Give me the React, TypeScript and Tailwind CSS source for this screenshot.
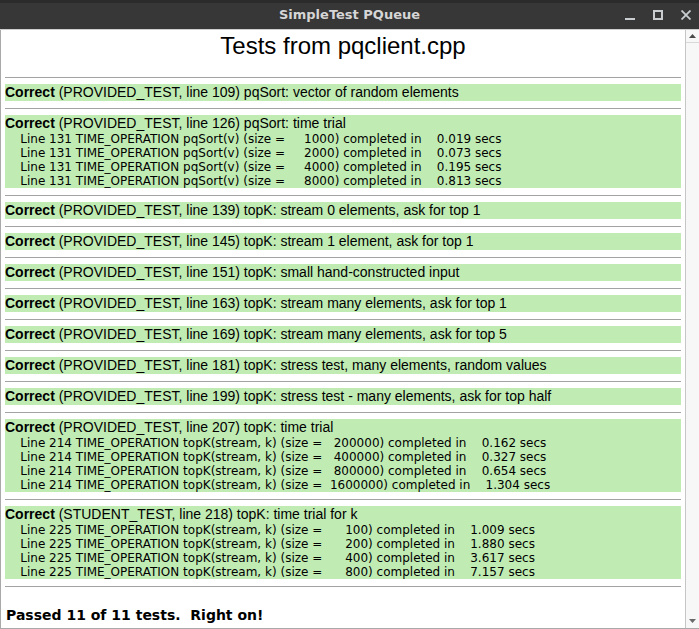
type Section = {
  label: string;
  head: string;
  lines?: string[];
};

const op = (line: number, call: string, n: number, t: string) =>
  `    Line ${line} TIME_OPERATION ${call} (size = ${String(n).padStart(8)}) completed in ${t.padStart(8)} secs`;

const sections: Section[] = [
  { label: 'PROVIDED_TEST', head: 'line 109) pqSort: vector of random elements' },
  {
    label: 'PROVIDED_TEST',
    head: 'line 126) pqSort: time trial',
    lines: [
      op(131, 'pqSort(v)', 1000, '0.019'),
      op(131, 'pqSort(v)', 2000, '0.073'),
      op(131, 'pqSort(v)', 4000, '0.195'),
      op(131, 'pqSort(v)', 8000, '0.813'),
    ],
  },
  { label: 'PROVIDED_TEST', head: 'line 139) topK: stream 0 elements, ask for top 1' },
  { label: 'PROVIDED_TEST', head: 'line 145) topK: stream 1 element, ask for top 1' },
  { label: 'PROVIDED_TEST', head: 'line 151) topK: small hand-constructed input' },
  { label: 'PROVIDED_TEST', head: 'line 163) topK: stream many elements, ask for top 1' },
  { label: 'PROVIDED_TEST', head: 'line 169) topK: stream many elements, ask for top 5' },
  { label: 'PROVIDED_TEST', head: 'line 181) topK: stress test, many elements, random values' },
  { label: 'PROVIDED_TEST', head: 'line 199) topK: stress test - many elements, ask for top half' },
  {
    label: 'PROVIDED_TEST',
    head: 'line 207) topK: time trial',
    lines: [
      op(214, 'topK(stream, k)', 200000, '0.162'),
      op(214, 'topK(stream, k)', 400000, '0.327'),
      op(214, 'topK(stream, k)', 800000, '0.654'),
      op(214, 'topK(stream, k)', 1600000, '1.304'),
    ],
  },
  {
    label: 'STUDENT_TEST',
    head: 'line 218) topK: time trial for k',
    lines: [
      op(225, 'topK(stream, k)', 100, '1.009'),
      op(225, 'topK(stream, k)', 200, '1.880'),
      op(225, 'topK(stream, k)', 400, '3.617'),
      op(225, 'topK(stream, k)', 800, '7.157'),
    ],
  },
];

function TitleBar() {
  return (
    <div className="h-[29px] shrink-0 bg-[#373737] relative flex items-center justify-center border-t-[3px] border-[#2b2b2b]">
      <span className="font-['DejaVu_Sans',sans-serif] font-bold text-[13px] text-[#d6d6d6] -mt-[3px]">
        SimpleTest PQueue
      </span>
      <div className="absolute right-[8px] top-[7px] flex items-center gap-[18px] text-[#c9cdd0]">
        <svg width="10" height="10" viewBox="0 0 10 10">
          <rect x="0" y="8" width="10" height="2" fill="currentColor" />
        </svg>
        <svg width="10" height="10" viewBox="0 0 10 10">
          <rect x="1" y="1" width="8" height="8" fill="none" stroke="currentColor" strokeWidth="2" />
        </svg>
        <svg width="10" height="10" viewBox="0 0 10 10">
          <path d="M0.5 0.5 L9.5 9.5 M9.5 0.5 L0.5 9.5" stroke="currentColor" strokeWidth="1.8" />
        </svg>
      </div>
    </div>
  );
}

function Scrollbar() {
  return (
    <div className="w-[14px] shrink-0 border-l border-[#c6c6c6] bg-[#f7f7f7] flex flex-col">
      <div className="h-[13px] border-b border-[#d8d8d8] flex items-center justify-center">
        <svg width="7" height="4" viewBox="0 0 7 4">
          <path d="M0 4 L3.5 0 L7 4 Z" fill="#4a4a4a" />
        </svg>
      </div>
      <div className="flex-1" />
      <div className="h-[14px] flex items-center justify-center">
        <svg width="7" height="4" viewBox="0 0 7 4">
          <path d="M0 0 L3.5 4 L7 0 Z" fill="#6a6a6a" />
        </svg>
      </div>
    </div>
  );
}

export default function App() {
  return (
    <div className="w-[699px] h-[629px] flex flex-col bg-white overflow-hidden">
      <TitleBar />
      <div className="h-px bg-[#cfcfcf] shrink-0" />
      <div className="flex-1 flex border-l border-b border-[#a9a9a9] min-h-0">
        <div className="flex-1 px-[4px] text-black">
          <h1 className="mt-[2px] h-[28px] leading-[28px] text-center font-['Liberation_Sans',sans-serif] text-[24px]">
            Tests from pqclient.cpp
          </h1>
          <div className="mt-[17px]">
            {sections.map((s, i) => (
              <div key={i}>
                <div className="h-px bg-[#a3a3a3]" />
                <div className="mt-[6px] mb-[7px] bg-[#c0ecb4]">
                  <p className="h-[17px] leading-[17px] text-[14px] font-['Liberation_Sans',sans-serif] whitespace-nowrap">
                    <span className="font-bold">Correct</span> ({s.label}, {s.head}
                  </p>
                  {s.lines?.map((l, j) => (
                    <p
                      key={j}
                      className="h-[14px] leading-[14px] text-[12px] font-['DejaVu_Sans',sans-serif] whitespace-pre"
                    >
                      {l}
                    </p>
                  ))}
                </div>
              </div>
            ))}
            <div className="h-px bg-[#a3a3a3]" />
          </div>
          <p className="mt-[20px] h-[17px] leading-[17px] text-[14px] font-bold font-['DejaVu_Sans',sans-serif] whitespace-pre pl-[1px]">
            {'Passed 11 of 11 tests.  Right on!'}
          </p>
        </div>
        <Scrollbar />
      </div>
    </div>
  );
}
